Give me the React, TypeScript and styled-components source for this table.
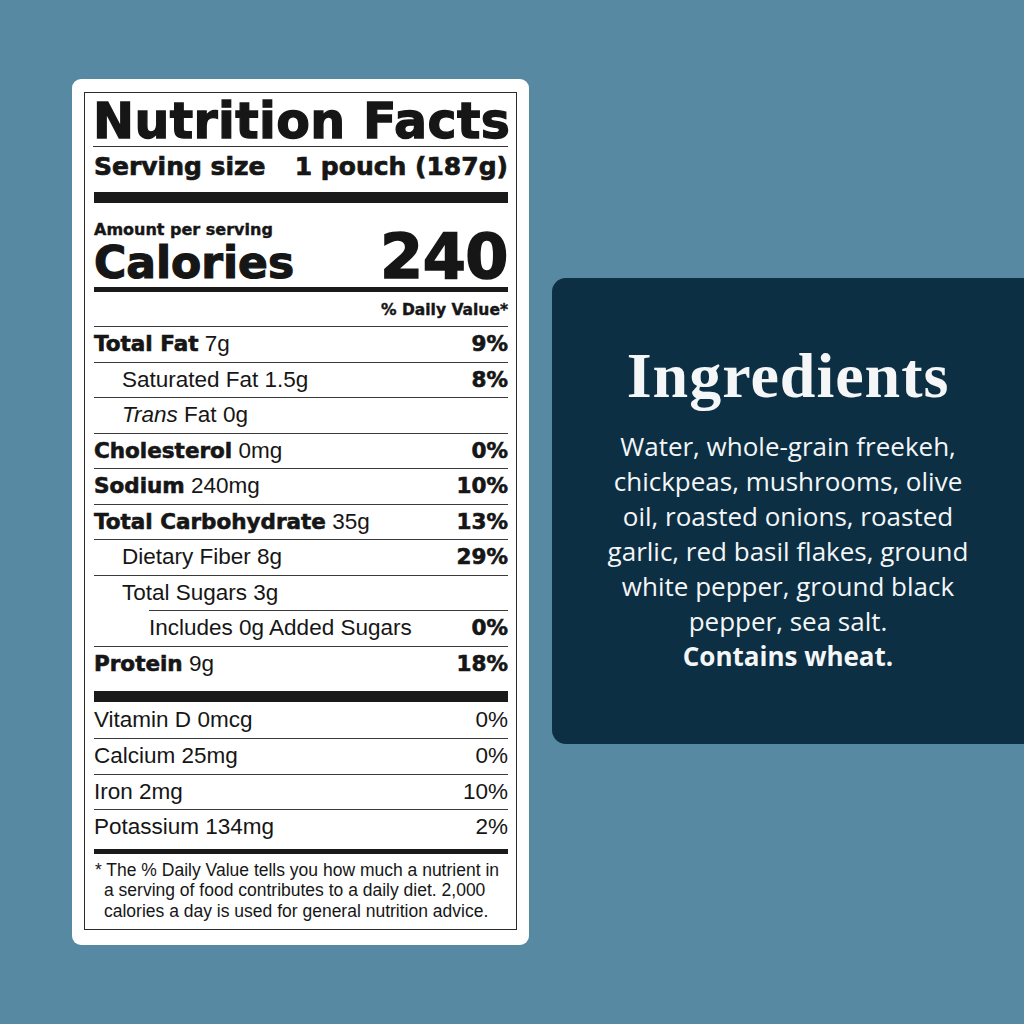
import React from "react";
import styled, { createGlobalStyle } from "styled-components";

const GlobalStyle = createGlobalStyle`
  html, body {
    margin: 0;
    padding: 0;
    background: #5889a3;
    overflow: hidden;
  }
  * { box-sizing: border-box; }
`;

const HEAVY = `"DejaVu Sans", "Liberation Sans", sans-serif`;
const REG = `"Liberation Sans", Arial, sans-serif`;
const INK = "#161616";

const Page = styled.div`
  width: 1024px;
  height: 1024px;
  display: flex;
  align-items: flex-start;
  gap: 23px;
  padding: 79px 0 0 72px;
  background: #5889a3;
`;

const Card = styled.div`
  width: 457px;
  flex: none;
  background: #ffffff;
  border-radius: 9px;
  padding: 13px 12px 15px 12px;
`;

const Label = styled.div`
  border: 1.5px solid #2b2b2b;
  padding: 0 8px 0 9px;
  color: ${INK};
  font-family: ${REG};
`;

const Title = styled.h1`
  margin: 0;
  padding-top: 4px;
  font-family: ${HEAVY};
  font-weight: 700;
  font-size: 49px;
  line-height: 49px;
  letter-spacing: 0.4px;
  margin-left: -1px;
  white-space: nowrap;
  -webkit-text-stroke: 1.3px ${INK};
  border-bottom: 1px solid #333;
`;

const ServingRow = styled.div`
  display: flex;
  justify-content: space-between;
  align-items: baseline;
  padding-top: 5px;
  font-family: ${HEAVY};
  font-weight: 700;
  font-size: 25px;
  line-height: 30px;
  white-space: nowrap;
  -webkit-text-stroke: 0.7px ${INK};
`;

const ThickRule = styled.div<{ $h: number; $mt?: number }>`
  height: ${(p) => p.$h}px;
  margin-top: ${(p) => p.$mt ?? 0}px;
  background: #1a1a1a;
`;

const CalorieBlock = styled.div`
  display: flex;
  justify-content: space-between;
  align-items: flex-end;
  padding: 18px 0 2px;
`;

const CalorieLeft = styled.div`
  display: flex;
  flex-direction: column;
  gap: 2px;
`;

const AmountText = styled.div`
  font-family: ${HEAVY};
  font-weight: 700;
  font-size: 16px;
  line-height: 18px;
  -webkit-text-stroke: 0.4px ${INK};
`;

const CaloriesWord = styled.div`
  font-family: ${HEAVY};
  font-weight: 700;
  font-size: 44px;
  line-height: 44px;
  -webkit-text-stroke: 1.2px ${INK};
`;

const CaloriesNum = styled.div`
  font-family: ${HEAVY};
  font-weight: 700;
  font-size: 62px;
  line-height: 56px;
  letter-spacing: -0.5px;
  -webkit-text-stroke: 1.6px ${INK};
`;

const DVHeader = styled.div`
  text-align: right;
  padding: 8px 0 6px;
  font-family: ${HEAVY};
  font-weight: 700;
  font-size: 15.5px;
  line-height: 20px;
  -webkit-text-stroke: 0.4px ${INK};
`;

const Row = styled.div<{ $indent?: number; $inset?: number; $rule?: boolean; $extra?: number }>`
  display: flex;
  justify-content: space-between;
  align-items: baseline;
  font-family: ${REG};
  font-size: 22.5px;
  line-height: 34.55px;
  white-space: nowrap;
  border-top: 1px solid ${(p) => (p.$rule === false ? "transparent" : "#3a3a3a")};
  padding-left: ${(p) => p.$indent ?? 0}px;
  margin-left: ${(p) => p.$inset ?? 0}px;
  padding-bottom: ${(p) => p.$extra ?? 0}px;
`;

const Strong = styled.span`
  font-family: ${HEAVY};
  font-weight: 700;
  font-size: 21.5px;
  -webkit-text-stroke: 0.6px ${INK};
`;

const Em = styled.span`
  font-style: italic;
`;

const Pct = styled.span<{ $bold?: boolean }>`
  font-family: ${(p) => (p.$bold ? HEAVY : REG)};
  font-weight: ${(p) => (p.$bold ? 700 : 400)};
  font-size: ${(p) => (p.$bold ? 21.5 : 22.5)}px;
  -webkit-text-stroke: ${(p) => (p.$bold ? `0.6px ${INK}` : "0")};
`;

const Footnote = styled.p`
  margin: 0;
  padding: 6px 0 8px 10px;
  text-indent: -9px;
  font-family: ${REG};
  font-size: 17.5px;
  line-height: 20.5px;
  white-space: nowrap;
`;

const Panel = styled.section`
  flex: 1;
  margin-top: 199px;
  background: #0c2f44;
  border-radius: 14px 0 0 14px;
  padding: 63px 20px 70px;
  text-align: center;
  color: #f4f6f7;
`;

const PanelTitle = styled.h2`
  margin: 0 0 18px;
  font-family: "Liberation Serif", "Times New Roman", serif;
  font-weight: 700;
  font-size: 64px;
  line-height: 70px;
  letter-spacing: 1px;
`;

const PanelText = styled.p`
  margin: 0;
  font-family: "Open Sans", "Noto Sans", sans-serif;
  font-weight: 500;
  font-size: 26px;
  line-height: 35px;
  white-space: nowrap;
`;

const Bold = styled.strong`
  font-weight: 700;
`;

type Nutrient = {
  name: string;
  amount: string;
  dv?: string;
  bold?: boolean;
  indent?: number;
  inset?: number;
  italicPrefix?: string;
  extra?: number;
};

const nutrients: Nutrient[] = [
  { name: "Total Fat", amount: "7g", dv: "9%", bold: true },
  { name: "Saturated Fat", amount: "1.5g", dv: "8%", indent: 28 },
  { name: "Fat", amount: "0g", indent: 28, italicPrefix: "Trans" },
  { name: "Cholesterol", amount: "0mg", dv: "0%", bold: true },
  { name: "Sodium", amount: "240mg", dv: "10%", bold: true },
  { name: "Total Carbohydrate", amount: "35g", dv: "13%", bold: true },
  { name: "Dietary Fiber", amount: "8g", dv: "29%", indent: 28 },
  { name: "Total Sugars", amount: "3g", indent: 28 },
  { name: "Includes 0g Added Sugars", amount: "", dv: "0%", inset: 55 },
  { name: "Protein", amount: "9g", dv: "18%", bold: true, extra: 10 },
];

const vitamins = [
  { name: "Vitamin D", amount: "0mcg", dv: "0%" },
  { name: "Calcium", amount: "25mg", dv: "0%" },
  { name: "Iron", amount: "2mg", dv: "10%" },
  { name: "Potassium", amount: "134mg", dv: "2%" },
];

export default function App() {
  return (
    <>
      <GlobalStyle />
      <Page>
        <Card>
          <Label>
            <Title>Nutrition Facts</Title>
            <ServingRow>
              <span>Serving size</span>
              <span>1 pouch (187g)</span>
            </ServingRow>
            <ThickRule $h={11} $mt={10} />
            <CalorieBlock>
              <CalorieLeft>
                <AmountText>Amount per serving</AmountText>
                <CaloriesWord>Calories</CaloriesWord>
              </CalorieLeft>
              <CaloriesNum>240</CaloriesNum>
            </CalorieBlock>
            <ThickRule $h={5} />
            <DVHeader>% Daily Value*</DVHeader>
            {nutrients.map((n) => (
              <Row key={n.name} $indent={n.indent} $inset={n.inset} $extra={n.extra}>
                <span>
                  {n.bold ? <Strong>{n.name}</Strong> : n.italicPrefix ? (
                    <>
                      <Em>{n.italicPrefix}</Em> {n.name}
                    </>
                  ) : (
                    n.name
                  )}
                  {n.amount ? ` ${n.amount}` : ""}
                </span>
                {n.dv && <Pct $bold>{n.dv}</Pct>}
              </Row>
            ))}
            <ThickRule $h={11} />
            {vitamins.map((v, i) => (
              <Row key={v.name} $rule={i !== 0} $extra={i === vitamins.length - 1 ? 4 : 0}>
                <span>
                  {v.name} {v.amount}
                </span>
                <Pct>{v.dv}</Pct>
              </Row>
            ))}
            <ThickRule $h={5} />
            <Footnote>
              * The % Daily Value tells you how much a nutrient in
              <br />
              a serving of food contributes to a daily diet. 2,000
              <br />
              calories a day is used for general nutrition advice.
            </Footnote>
          </Label>
        </Card>
        <Panel>
          <PanelTitle>Ingredients</PanelTitle>
          <PanelText>
            Water, whole-grain freekeh,
            <br />
            chickpeas, mushrooms, olive
            <br />
            oil, roasted onions, roasted
            <br />
            garlic, red basil flakes, ground
            <br />
            white pepper, ground black
            <br />
            pepper, sea salt.
            <br />
            <Bold>Contains wheat.</Bold>
          </PanelText>
        </Panel>
      </Page>
    </>
  );
}
